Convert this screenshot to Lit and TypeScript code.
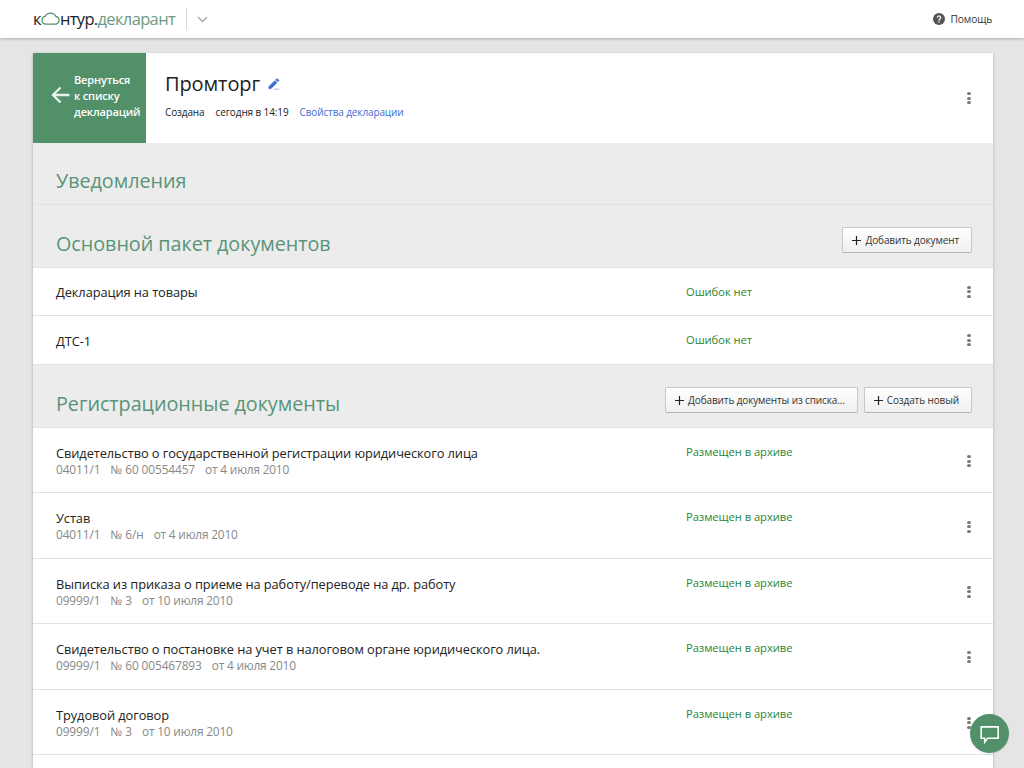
import { LitElement, html, css } from "lit";
import { customElement } from "lit/decorators.js";

const plus = html`<svg class="plus" width="9" height="9" viewBox="0 0 9 9"><path d="M4.500 0v9M0 4.500h9" stroke="#222" stroke-width="1.200" fill="none"/></svg>`;
const dots = html`<div class="dots"><i></i><i></i><i></i></div>`;

const regs = [
  ["Свидетельство о государственной регистрации юридического лица", "04011/1", "№ 60 00554457", "от 4 июля 2010"],
  ["Устав", "04011/1", "№ 6/н", "от 4 июля 2010"],
  ["Выписка из приказа о приеме на работу/переводе на др. работу", "09999/1", "№ 3", "от 10 июля 2010"],
  ["Свидетельство о постановке на учет в налоговом органе юридического лица.", "09999/1", "№ 60 005467893", "от 4 июля 2010"],
  ["Трудовой договор", "09999/1", "№ 3", "от 10 июля 2010"],
];

@customElement("app-root")
export class AppRoot extends LitElement {
  static styles = css`
    :host { display: block; height: 768px; overflow: hidden; background: #e5e5e5; font-family: "Open Sans", "Noto Sans", sans-serif; color: #222; }
    * { box-sizing: border-box; }
    .top { height: 38px; background: #fff; box-shadow: 0 1px 3px rgba(0,0,0,.25); display: flex; align-items: center; padding: 0 32px 0 33px; position: relative; }
    .logo { font-size: 16.500px; letter-spacing: -0.65px; display: flex; align-items: center; line-height: 38px; }
    .logo .g { color: #6c9a83; }
    .sep { width: 1px; height: 22px; background: #d9d9d9; margin: 0 10px 0 11px; }
    .help { margin-left: auto; display: flex; align-items: center; gap: 6px; font-size: 10.200px; letter-spacing: -0.15px; color: #333; }
    .card { width: 960px; margin: 15px 0 0 33px; background: #ececec; box-shadow: 0 1px 3px rgba(0,0,0,.25); }
    .head { height: 90px; background: #fff; display: flex; align-items: stretch; padding-right: 21px; position: relative; }
    .back { width: 113px; background: #519069; color: #fff; display: flex; align-items: center; padding: 0 0 4px 18px; gap: 4px; font-size: 11px; font-weight: 600; line-height: 16px; letter-spacing: -0.15px; }
    .back svg { flex: none; margin-top: -2px; }
    .title-box { padding: 17px 0 0 19px; flex: 1; }
    .title { font-size: 20px; line-height: 27px; display: flex; align-items: center; gap: 8px; letter-spacing: -0.1px; }
    .meta { font-size: 10px; margin-top: 8px; display: flex; gap: 11px; letter-spacing: -0.12px; line-height: 14px; }
    .meta a { color: #3e6fd0; }
    .sec { height: 62px; display: flex; align-items: flex-end; justify-content: space-between; padding: 0 21px 10px 23px; border-bottom: 1px solid #e2e2e2; }
    .sec.tall { height: 63px; }
    .sec h2 { margin: 0; font-size: 19.800px; font-weight: 400; color: #5a9478; line-height: 27px; letter-spacing: -0.05px; }
    .btns { display: flex; gap: 6px; margin-bottom: 4px; }
    .btn { height: 26px; background: linear-gradient(#fff, #f0f0f0); border: 1px solid #c8c8c8; border-bottom-color: #b5b5b5; border-radius: 2px; display: flex; align-items: center; gap: 4px; padding: 0 12px 0 9px; font-size: 10px; letter-spacing: -0.12px; color: #333; }
    .plus { flex: none; }
    .row { background: #fff; display: flex; border-bottom: 1px solid #e2e2e2; padding-left: 23px; position: relative; }
    .row.s { height: 48px; align-items: center; }
    .row.s.b { height: 49px; }
    .row.s .name { padding-top: 2px; }
    .row.s.b .name { padding-top: 3px; }
    .row.s.b .status { margin-top: -1px; }
    .row.l { height: 65.400px; padding-top: 17px; }
    .info { width: 630px; flex: none; }
    .name { font-size: 12.840px; line-height: 17px; letter-spacing: -0.08px; color: #222; }
    .sub { font-size: 11.900px; line-height: 15px; color: #888; display: flex; gap: 10px; letter-spacing: -0.12px; }
    .sub .d { letter-spacing: -0.2px; }
    .status { font-size: 11.200px; color: #2a8532; line-height: 15px; letter-spacing: -0.05px; }
    .row.l .status { margin-top: -1px; }
    .dots { display: flex; flex-direction: column; gap: 1.500px; position: absolute; right: 22px; top: 50%; transform: translateY(-50%); }
    .row.l .dots { margin-top: 1px; }
    .head .dots { right: 22px; top: 45px; }
    .dots i { width: 3.600px; height: 3px; border-radius: 50%; background: #777; display: block; }
    .chat { position: fixed; left: 970px; top: 714px; width: 39px; height: 39px; border-radius: 50%; background: #519069; display: flex; align-items: center; justify-content: center; box-shadow: 0 1px 2px rgba(0,0,0,.1); }
  `;

  render() {
    return html`
      <div class="top">
        <div class="logo">к<svg width="19" height="14" viewBox="0 0 20 14"><path d="M5 12.500a4.200 4.200 0 0 1-.6-8.300C5.500 2 8 .8 10 .8s4.500 1.200 5.600 3.400a4.200 4.200 0 0 1-.6 8.300z" fill="none" stroke="#519069" stroke-width="1.300"/></svg>нтур.<span class="g">декларант</span></div>
        <div class="sep"></div>
        <svg width="11" height="7" viewBox="0 0 11 7"><path d="M1 1l4.500 4.500L10 1" fill="none" stroke="#aaa" stroke-width="1.500"/></svg>
        <div class="help">
          <svg width="12" height="12" viewBox="0 0 13 13"><circle cx="6.500" cy="6.500" r="6.500" fill="#555"/><path d="M4.700 5a1.800 1.800 0 1 1 2.700 1.600c-.6.400-.9.700-.9 1.400" fill="none" stroke="#fff" stroke-width="1.300"/><rect x="5.800" y="8.800" width="1.400" height="1.400" fill="#fff"/></svg>
          Помощь
        </div>
      </div>
      <div class="card">
        <div class="head">
          <div class="back">
            <svg width="19" height="18" viewBox="0 0 19 18"><path d="M18.500 9H2M9.500 1.500L2 9l7.500 7.500" fill="none" stroke="#e9f2ec" stroke-width="2.400"/></svg>
            <div>Вернуться<br>к списку<br>деклараций</div>
          </div>
          <div class="title-box">
            <div class="title">Промторг
              <svg width="12" height="12" viewBox="0 0 14 14"><path d="M1 10l7-7 2.500 2.500-7 7H1zM9 2l1.500-1.500L13 3l-1.500 1.500zM7 13h6" fill="#3e6fd0" stroke="#3e6fd0" stroke-width=".6"/></svg>
            </div>
            <div class="meta"><span>Создана</span><span>сегодня в 14:19</span><a>Свойства декларации</a></div>
          </div>
          ${dots}
        </div>
        <div class="sec"><h2>Уведомления</h2></div>
        <div class="sec tall">
          <h2>Основной пакет документов</h2>
          <div class="btns"><div class="btn">${plus}Добавить документ</div></div>
        </div>
        <div class="row s"><div class="info name">Декларация на товары</div><div class="status">Ошибок нет</div>${dots}</div>
        <div class="row s b"><div class="info name">ДТС-1</div><div class="status">Ошибок нет</div>${dots}</div>
        <div class="sec tall">
          <h2>Регистрационные документы</h2>
          <div class="btns"><div class="btn">${plus}Добавить документы из списка...</div><div class="btn">${plus}Создать новый</div></div>
        </div>
        ${regs.map(r => html`<div class="row l"><div class="info"><div class="name">${r[0]}</div><div class="sub"><span>${r[1]}</span><span>${r[2]}</span><span class="d">${r[3]}</span></div></div><div class="status">Размещен в архиве</div>${dots}</div>`)}
        <div class="row l"></div>
      </div>
      <div class="chat"><svg width="20" height="20" viewBox="0 0 20 20"><path d="M1.200 2.900H18.200V14.300H7.700L4.700 18.200V14.300H1.200z" fill="none" stroke="#fff" stroke-width="1.600"/></svg></div>
    `;
  }
}
